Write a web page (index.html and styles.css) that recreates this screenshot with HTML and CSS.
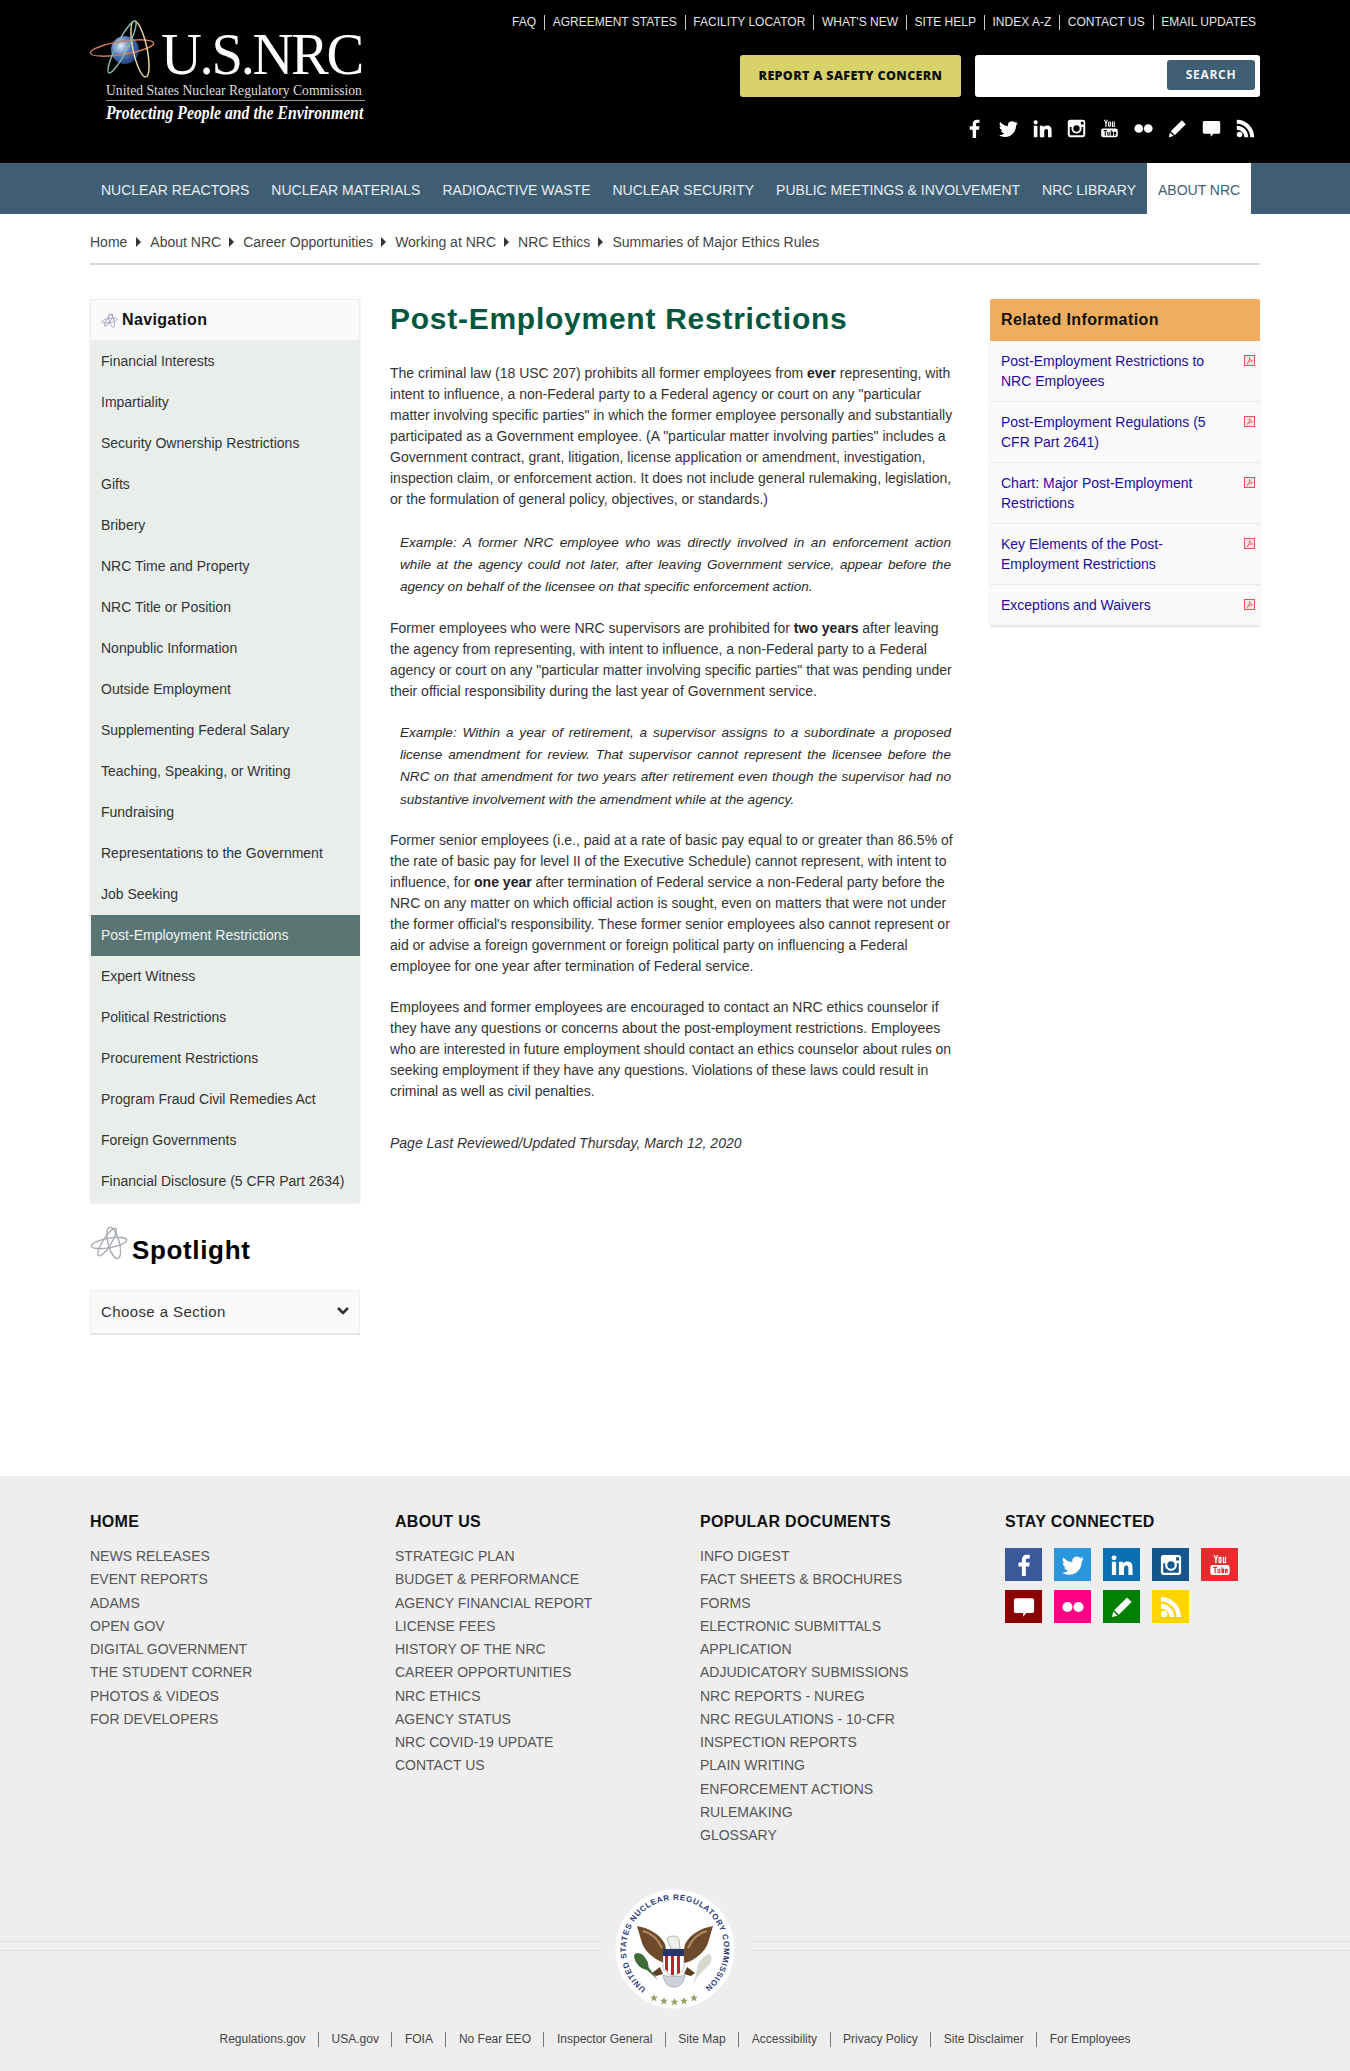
FILE: index.html
```html
<!DOCTYPE html>
<html lang="en">
<head>
<meta charset="utf-8">
<title>Post-Employment Restrictions</title>
<link rel="stylesheet" href="styles.css">
</head>
<body>
<svg class="defs" width="0" height="0" aria-hidden="true">
  <defs>
    <symbol id="i-f" viewBox="0 0 24 24"><path d="M14 24V13.5h3.6l.6-4.2H14V6.8c0-1.2.4-2 2.1-2h2.2V1c-.4 0-1.700-.2-3.200-.2-3.200 0-5.400 2-5.400 5.500v3H6v4.200h3.700V24z"/></symbol>
    <symbol id="i-t" viewBox="0 0 24 24"><path d="M23.500 5c-.9.400-1.800.7-2.800.8 1-.6 1.800-1.500 2.100-2.700-.9.600-2 1-3.100 1.200A4.900 4.900 0 0 0 11.400 8.800C7.400 8.600 3.800 6.700 1.400 3.700c-1.300 2.200-.6 5.100 1.500 6.500-.8 0-1.500-.2-2.200-.6 0 2.300 1.600 4.400 3.900 4.900-.7.200-1.500.2-2.200.1.600 2 2.400 3.400 4.600 3.400A9.900 9.900 0 0 1 0 20.500 14 14 0 0 0 7.500 22.700c9.100 0 14.300-7.700 14-14.600 1-.7 1.800-1.600 2-3.100z"/></symbol>
    <symbol id="i-in" viewBox="0 0 24 24"><path d="M1 8.500h4.600V23H1zM3.300 1.500a2.700 2.700 0 1 1 0 5.400 2.700 2.700 0 0 1 0-5.400zM8.600 8.500H13v2c.7-1.200 2.300-2.400 4.700-2.400 4.900 0 5.800 3.100 5.800 7.300V23H19v-6.700c0-1.600 0-3.700-2.200-3.700s-2.600 1.800-2.600 3.600V23H8.600z"/></symbol>
    <symbol id="i-ig" viewBox="0 0 24 24"><path fill-rule="evenodd" d="M4 1h16a3 3 0 0 1 3 3v16a3 3 0 0 1-3 3H4a3 3 0 0 1-3-3V4a3 3 0 0 1 3-3zm13.500 2.500v3.500h3.500V3.500zM3.500 10v9.500c0 .6.400 1 1 1h15c.6 0 1-.4 1-1V10h-2.300a6.500 6.500 0 1 1-12.400 0zM12 8a4 4 0 1 0 0 8 4 4 0 0 0 0-8z"/></symbol>
    <symbol id="i-yt" viewBox="0 0 24 24"><path fill-rule="evenodd" d="M5 1h1.500l1 3.500L8.500 1H10L8.300 6v4H6.800V6zM12 3c1.200 0 1.800.7 1.800 1.800v3.400c0 1.100-.6 1.800-1.800 1.800s-1.800-.7-1.800-1.800V4.800C10.200 3.700 10.800 3 12 3zm0 1.200c-.3 0-.4.200-.4.500v3.600c0 .3.100.5.400.5s.4-.2.400-.5V4.700c0-.3-.1-.5-.4-.5zM15 3h1.400v5.400c0 .3.100.4.300.4s.4-.2.600-.4V3h1.400v7h-1.400v-.8c-.4.500-.9.800-1.400.800-.7 0-.9-.5-.9-1.200zM4 12h16a2.500 2.500 0 0 1 2.500 2.500v6A2.500 2.500 0 0 1 20 23H4a2.500 2.500 0 0 1-2.500-2.500v-6A2.500 2.500 0 0 1 4 12zm.5 2v1.300H6V21h1.300v-5.700h1.500V14zm4.700 2v4c0 .7.300 1 .8 1 .4 0 .8-.2 1.100-.6v.6h1.100v-5h-1.100v3.700c-.2.200-.4.300-.5.300-.2 0-.3-.1-.3-.3V16zm4.300-2v7h1.100v-.4c.3.300.6.500 1 .500.700 0 1-.5 1-1.300v-2.700c0-.9-.3-1.400-1-1.400-.4 0-.7.200-1 .5V14zm5.500 2c-1 0-1.500.6-1.500 1.500v2c0 1 .5 1.600 1.500 1.600s1.500-.6 1.500-1.500v-.3h-1.100v.3c0 .4-.1.600-.4.600s-.4-.2-.4-.6V19h1.900v-1.500c0-.9-.5-1.500-1.500-1.500z"/></symbol>
    <symbol id="i-fl" viewBox="0 0 24 24"><circle cx="6" cy="12" r="5.500"/><circle cx="18" cy="12" r="5.500"/></symbol>
    <symbol id="i-pen" viewBox="0 0 24 24"><path d="M17.500 1.500l5 5L8.500 20.500l-5-5zM2.500 17l4.500 4.500-6 1.500z"/></symbol>
    <symbol id="i-ch" viewBox="0 0 24 24"><path d="M3 2.500h18a2 2 0 0 1 2 2v12a2 2 0 0 1-2 2h-6.500L11 22.500v-4H3a2 2 0 0 1-2-2v-12a2 2 0 0 1 2-2z"/></symbol>
    <symbol id="i-rss" viewBox="0 0 24 24"><circle cx="4.500" cy="19.500" r="3.500"/><path d="M1 8.500v5c5.300 0 9.500 4.200 9.500 9.500h5C15.500 15 9 8.500 1 8.500zM1 1v5c9.400 0 17 7.600 17 17h5C23 10.800 13.200 1 1 1z"/></symbol>
    <symbol id="i-atom" viewBox="0 0 40 36"><g fill="none" stroke-width="1.500"><ellipse cx="20" cy="18" rx="19" ry="5" transform="rotate(-10 20 18)"/><ellipse cx="25" cy="18" rx="17" ry="6" transform="rotate(75 25 18)"/><ellipse cx="18" cy="17" rx="17" ry="4.500" transform="rotate(122 18 17)"/></g></symbol>
    <symbol id="i-pdf" viewBox="0 0 11 11"><rect x=".5" y=".5" width="10" height="10" fill="#fbe3e3" stroke="#e8505b"/><path d="M3 8.500c1.500-1 3-4 2.500-6 .5 2 1.500 3 3 3.500-2-.3-4 .8-5.500 2.500z" fill="none" stroke="#e8505b" stroke-width=".8"/></symbol>
    <polygon id="star" points="0,-4 1.100,-1.200 4,-1.200 1.700,.6 2.500,3.400 0,1.700 -2.500,3.400 -1.700,.6 -4,-1.200 -1.100,-1.200"/>
  </defs>
</svg>

<header class="masthead">
  <div class="wrap masthead-in">
    <a class="logo" href="#">
      <svg class="logo-atom" viewBox="0 0 66 58" aria-hidden="true">
        <defs><radialGradient id="globe" cx=".35" cy=".35" r=".75"><stop offset="0" stop-color="#e3ebf8"/><stop offset=".5" stop-color="#4a75bb"/><stop offset="1" stop-color="#1b3467"/></radialGradient></defs>
        <circle cx="35" cy="30" r="14" fill="url(#globe)"/>
        <g fill="none" stroke-width="1.500">
          <ellipse cx="32" cy="28" rx="32" ry="6.500" transform="rotate(-9 32 28)" stroke="#c87a5a"/>
          <ellipse cx="50" cy="29" rx="28.500" ry="7" transform="rotate(78 50 29)" stroke="#e8d7a0"/>
          <ellipse cx="32" cy="27" rx="29" ry="5.500" transform="rotate(117 32 27)" stroke="#7fb6a8"/>
        </g>
      </svg>
      <div class="logo-main"><span>U.S.NRC</span></div>
      <div class="logo-sub"><span>United States Nuclear Regulatory Commission</span></div>
      <div class="logo-tag"><span>Protecting People and the Environment</span></div>
    </a>
    <div class="mast-right">
      <ul class="toplinks">
        <li>FAQ</li><li>AGREEMENT STATES</li><li>FACILITY LOCATOR</li><li>WHAT'S NEW</li><li>SITE HELP</li><li>INDEX A-Z</li><li>CONTACT US</li><li>EMAIL UPDATES</li>
      </ul>
      <div class="actions">
        <a class="report" href="#">REPORT A SAFETY CONCERN</a>
        <div class="searchbox"><span class="searchbtn">SEARCH</span></div>
      </div>
      <div class="socials">
        <svg class="si"><use href="#i-f"/></svg>
        <svg class="si"><use href="#i-t"/></svg>
        <svg class="si"><use href="#i-in"/></svg>
        <svg class="si"><use href="#i-ig"/></svg>
        <svg class="si"><use href="#i-yt"/></svg>
        <svg class="si"><use href="#i-fl"/></svg>
        <svg class="si"><use href="#i-pen"/></svg>
        <svg class="si"><use href="#i-ch"/></svg>
        <svg class="si"><use href="#i-rss"/></svg>
      </div>
    </div>
  </div>
</header>

<nav class="mainnav">
  <ul class="wrap mainnav-in">
    <li>NUCLEAR REACTORS</li><li>NUCLEAR MATERIALS</li><li>RADIOACTIVE WASTE</li><li>NUCLEAR SECURITY</li><li>PUBLIC MEETINGS &amp; INVOLVEMENT</li><li>NRC LIBRARY</li><li class="on">ABOUT NRC</li>
  </ul>
</nav>

<div class="wrap">
  <ul class="crumbs">
    <li>Home</li><li>About NRC</li><li>Career Opportunities</li><li>Working at NRC</li><li>NRC Ethics</li><li>Summaries of Major Ethics Rules</li>
  </ul>
</div>

<div class="wrap page">
  <aside class="left">
    <div class="sidenav">
      <div class="sidenav-h"><svg class="nav-atom"><use href="#i-atom"/></svg>Navigation</div>
      <ul class="sidenav-list">
        <li>Financial Interests</li>
        <li>Impartiality</li>
        <li>Security Ownership Restrictions</li>
        <li>Gifts</li>
        <li>Bribery</li>
        <li>NRC Time and Property</li>
        <li>NRC Title or Position</li>
        <li>Nonpublic Information</li>
        <li>Outside Employment</li>
        <li>Supplementing Federal Salary</li>
        <li>Teaching, Speaking, or Writing</li>
        <li>Fundraising</li>
        <li>Representations to the Government</li>
        <li>Job Seeking</li>
        <li class="on">Post-Employment Restrictions</li>
        <li>Expert Witness</li>
        <li>Political Restrictions</li>
        <li>Procurement Restrictions</li>
        <li>Program Fraud Civil Remedies Act</li>
        <li>Foreign Governments</li>
        <li>Financial Disclosure (5 CFR Part 2634)</li>
      </ul>
    </div>
    <h2 class="spot"><svg class="spot-atom"><use href="#i-atom"/></svg>Spotlight</h2>
    <div class="choose"><span>Choose a Section</span><svg class="chev" viewBox="0 0 14 10"><path d="M2 2l5 5 5-5" fill="none" stroke="#333" stroke-width="2.600"/></svg></div>
  </aside>

  <main class="content">
    <h1>Post-Employment Restrictions</h1>
    <p class="lead">The criminal law (18 USC 207) prohibits all former employees from <b>ever</b> representing, with intent to influence, a non-Federal party to a Federal agency or court on any "particular matter involving specific parties" in which the former employee personally and substantially participated as a Government employee. (A "particular matter involving parties" includes a Government contract, grant, litigation, license application or amendment, investigation, inspection claim, or enforcement action. It does not include general rulemaking, legislation, or the formulation of general policy, objectives, or standards.)</p>
    <p class="ex">Example: A former NRC employee who was directly involved in an enforcement action while at the agency could not later, after leaving Government service, appear before the agency on behalf of the licensee on that specific enforcement action.</p>
    <p>Former employees who were NRC supervisors are prohibited for <b>two years</b> after leaving the agency from representing, with intent to influence, a non-Federal party to a Federal agency or court on any "particular matter involving specific parties" that was pending under their official responsibility during the last year of Government service.</p>
    <p class="ex">Example: Within a year of retirement, a supervisor assigns to a subordinate a proposed license amendment for review. That supervisor cannot represent the licensee before the NRC on that amendment for two years after retirement even though the supervisor had no substantive involvement with the amendment while at the agency.</p>
    <p>Former senior employees (i.e., paid at a rate of basic pay equal to or greater than 86.5% of the rate of basic pay for level II of the Executive Schedule) cannot represent, with intent to influence, for <b>one year</b> after termination of Federal service a non-Federal party before the NRC on any matter on which official action is sought, even on matters that were not under the former official's responsibility. These former senior employees also cannot represent or aid or advise a foreign government or foreign political party on influencing a Federal employee for one year after termination of Federal service.</p>
    <p>Employees and former employees are encouraged to contact an NRC ethics counselor if they have any questions or concerns about the post-employment restrictions. Employees who are interested in future employment should contact an ethics counselor about rules on seeking employment if they have any questions. Violations of these laws could result in criminal as well as civil penalties.</p>
    <p class="updated">Page Last Reviewed/Updated Thursday, March 12, 2020</p>
  </main>

  <aside class="right">
    <div class="related-h">Related Information</div>
    <ul class="related">
      <li><span>Post-Employment Restrictions to NRC Employees</span><svg class="pdf"><use href="#i-pdf"/></svg></li>
      <li><span>Post-Employment Regulations (5 CFR Part 2641)</span><svg class="pdf"><use href="#i-pdf"/></svg></li>
      <li><span>Chart: Major Post-Employment Restrictions</span><svg class="pdf"><use href="#i-pdf"/></svg></li>
      <li><span>Key Elements of the Post-Employment Restrictions</span><svg class="pdf"><use href="#i-pdf"/></svg></li>
      <li><span>Exceptions and Waivers</span><svg class="pdf"><use href="#i-pdf"/></svg></li>
    </ul>
  </aside>
</div>

<footer class="footer">
  <div class="wrap fcols">
    <div class="fcol">
      <h3>HOME</h3>
      <ul><li>NEWS RELEASES</li><li>EVENT REPORTS</li><li>ADAMS</li><li>OPEN GOV</li><li>DIGITAL GOVERNMENT</li><li>THE STUDENT CORNER</li><li>PHOTOS &amp; VIDEOS</li><li>FOR DEVELOPERS</li></ul>
    </div>
    <div class="fcol">
      <h3>ABOUT US</h3>
      <ul><li>STRATEGIC PLAN</li><li>BUDGET &amp; PERFORMANCE</li><li>AGENCY FINANCIAL REPORT</li><li>LICENSE FEES</li><li>HISTORY OF THE NRC</li><li>CAREER OPPORTUNITIES</li><li>NRC ETHICS</li><li>AGENCY STATUS</li><li>NRC COVID-19 UPDATE</li><li>CONTACT US</li></ul>
    </div>
    <div class="fcol">
      <h3>POPULAR DOCUMENTS</h3>
      <ul><li>INFO DIGEST</li><li>FACT SHEETS &amp; BROCHURES</li><li>FORMS</li><li>ELECTRONIC SUBMITTALS</li><li>APPLICATION</li><li>ADJUDICATORY SUBMISSIONS</li><li>NRC REPORTS - NUREG</li><li>NRC REGULATIONS - 10-CFR</li><li>INSPECTION REPORTS</li><li>PLAIN WRITING</li><li>ENFORCEMENT ACTIONS</li><li>RULEMAKING</li><li>GLOSSARY</li></ul>
    </div>
    <div class="fcol">
      <h3>STAY CONNECTED</h3>
      <div class="tiles">
        <span class="tile c-fb"><svg><use href="#i-f"/></svg></span>
        <span class="tile c-tw"><svg><use href="#i-t"/></svg></span>
        <span class="tile c-li"><svg><use href="#i-in"/></svg></span>
        <span class="tile c-ig"><svg><use href="#i-ig"/></svg></span>
        <span class="tile c-yt"><svg><use href="#i-yt"/></svg></span>
        <span class="tile c-ch"><svg><use href="#i-ch"/></svg></span>
        <span class="tile c-fl"><svg><use href="#i-fl"/></svg></span>
        <span class="tile c-pn"><svg><use href="#i-pen"/></svg></span>
        <span class="tile c-rs"><svg><use href="#i-rss"/></svg></span>
      </div>
    </div>
  </div>

  <div class="sealrow">
    <span class="sealrule"></span>
    <svg class="seal" viewBox="0 0 120 120" role="img" aria-label="Seal">
      <defs><path id="ring" d="M31.900 100.100A49 49 0 1 1 88.100 100.100"/></defs>
      <circle cx="60" cy="60" r="59.500" fill="#fff"/>
      <text class="sealtxt"><textPath href="#ring" textLength="244" startOffset="1">UNITED STATES NUCLEAR REGULATORY COMMISSION</textPath></text>
      <path d="M22 37c11 2 22 7 28 18l3 16-3 3c-10-3-20-11-23-20z" fill="#6e4a2c"/>
      <path d="M98 37c-11 2-22 7-28 18l-3 16 3 3c10-3 20-11 23-20z" fill="#6e4a2c"/>
      <path d="M28 42c8 2 15 8 19 17M92 42c-8 2-15 8-19 17" fill="none" stroke="#b08a5c" stroke-width="2"/>
      <path d="M52 50c2-4 10-4 12 0l1 10h-9z" fill="#eee" stroke="#8a8a60" stroke-width=".6"/>
      <path d="M48 66h21v12c0 4-5 7-10.500 9C53 85 48 82 48 78z" fill="#fff" stroke="#666" stroke-width=".4"/>
      <path d="M48 60h21v7H48z" fill="#27366f"/>
      <path d="M50 67h3v16l-3-3zM56 67h3v19h-3zM62 67h3v17l-3 1z" fill="#b3272d"/>
      <path d="M45 78l-4 3-4 3 4 3 7-2zM72 78l4 3 4 3-4 3-7-2z" fill="#5c4023"/>
      <path d="M19 66c3-4 9-2 12 4 3 4 2 7 3 9l9 12-11-10c-7-1-13-8-13-15z" fill="#3f6b34"/>
      <path d="M94 65c4 2 3 8-1 12l-10 10-5 8 3-9 1-7c1-7 7-12 12-14z" fill="#d8d8cf"/>
      <path d="M48 86c4 2 18 2 22 0-1 9-6 12-11 12s-10-3-11-12z" fill="#cdd2dc" stroke="#7f8796" stroke-width=".5"/>
      <g fill="#9a9d64"><use href="#star" x="39" y="109"/><use href="#star" x="49" y="112"/><use href="#star" x="59.500" y="113"/><use href="#star" x="69" y="112"/><use href="#star" x="79" y="109"/></g>
    </svg>
    <span class="sealrule"></span>
  </div>

  <ul class="legal">
    <li>Regulations.gov</li><li>USA.gov</li><li>FOIA</li><li>No Fear EEO</li><li>Inspector General</li><li>Site Map</li><li>Accessibility</li><li>Privacy Policy</li><li>Site Disclaimer</li><li>For Employees</li>
  </ul>
</footer>
</body>
</html>
```

FILE: styles.css
```css
* { box-sizing: border-box; }
html, body { margin: 0; padding: 0; }
body { font-family: "Liberation Sans", Arial, sans-serif; font-size: 14px; color: #333; background: #fff; }
ul { list-style: none; margin: 0; padding: 0; }
a { text-decoration: none; color: inherit; }
.defs { position: absolute; }
.wrap { width: 1170px; margin: 0 auto; }

.masthead { background: #000; height: 163px; }
.masthead-in { display: flex; justify-content: space-between; height: 163px; }
.logo { display: block; width: 275px; padding-top: 24px; color: #fff; position: relative; }
.logo-atom { position: absolute; left: 0; top: 20px; width: 66px; height: 58px; overflow: visible; }
.logo-main { font-family: "Liberation Serif", serif; font-size: 59px; line-height: 60px; height: 58px; margin-left: 71px; white-space: nowrap; letter-spacing: -2.400px; }
.logo-main span { display: inline-block; transform: scaleX(.96); transform-origin: left top; }
.logo-sub { font-family: "Liberation Serif", serif; font-size: 14.500px; line-height: 16px; margin-left: 16px; white-space: nowrap; height: 19px; border-bottom: 1px solid #999; color: #ddd; }
.logo-sub span { display: inline-block; transform: scaleX(.94); transform-origin: left top; }
.logo-tag { font-family: "Liberation Serif", serif; font-style: italic; font-weight: bold; font-size: 18px; line-height: 22px; margin-left: 16px; padding-top: 1px; white-space: nowrap; }
.logo-tag span { display: inline-block; transform: scaleX(.875); transform-origin: left top; }

.mast-right { display: flex; flex-direction: column; align-items: flex-end; }
.toplinks { display: flex; padding-top: 15px; height: 55px; margin-right: 4px; }
.toplinks li { color: #e4e4e4; font-size: 12px; line-height: 15px; height: 15px; padding: 0 0 0 7.500px; margin-left: 8.100px; border-left: 1px solid #ccc; white-space: nowrap; }
.toplinks li:first-child { border-left: 0; }
.actions { display: flex; gap: 14px; }
.report { width: 221px; height: 42px; background: #d9d26a; border-radius: 3px; color: #111; font-family: "Open Sans", sans-serif; font-weight: 800; font-size: 12.500px; line-height: 42px; text-align: center; letter-spacing: .35px; }
.searchbox { width: 285px; height: 42px; background: #fff; border-radius: 3px; padding: 5px 5px 0 0; display: flex; justify-content: flex-end; align-items: flex-start; }
.searchbtn { width: 88px; height: 30px; background: #3f5e73; border-radius: 3px; color: #f2f2f2; font-family: "Open Sans", sans-serif; font-weight: 700; font-size: 12px; line-height: 29px; text-align: center; letter-spacing: .7px; }
.socials { display: flex; gap: 14.900px; margin-top: 22px; margin-right: 5px; }
.si { width: 19px; height: 19px; fill: #fff; }

.mainnav { background: #3f5e73; height: 51px; }
.mainnav-in { display: flex; height: 51px; }
.mainnav li { color: #e7edf1; font-size: 14px; line-height: 54px; padding: 0 11px; white-space: nowrap; }
.mainnav li.on { background: #fff; color: #3f5e73; }

.crumbs { display: flex; height: 51px; border-bottom: 2px solid #d9d9d9; padding-top: 19px; }
.crumbs li { line-height: 18px; color: #444; font-size: 14px; }
.crumbs li:first-child { padding-right: 1px; }
.crumbs li + li { padding-left: 8px; }
.crumbs li + li::before { content: ""; display: inline-block; width: 0; height: 0; border-left: 5.500px solid #333; border-top: 5px solid transparent; border-bottom: 5px solid transparent; margin: 0 9px 0 0; }

.page { display: flex; padding-top: 34px; height: 1211px; }
.left { width: 270px; flex: none; }
.content { width: 566px; flex: none; margin-left: 30px; }
.right { width: 270px; flex: none; margin-left: 34px; }

.sidenav { box-shadow: 0 1px 2px rgba(0,0,0,.12); }
.sidenav-h { height: 42px; background: #fafafa; border: 1px solid #eee; font-weight: bold; font-size: 16px; color: #111; line-height: 40px; padding-left: 10px; display: flex; align-items: center; letter-spacing: .35px; }
.nav-atom { width: 17px; height: 15px; margin-right: 4px; stroke: #8b88b8; fill: none; }
.sidenav-list li { height: 41px; background: #e9eeeb; border-left: 1px solid #f1f1f1; padding-left: 10px; line-height: 41px; font-size: 14px; color: #333; }
.sidenav-list li.on { background: #5a7672; color: #eef3f1; }
.spot { margin: 30px 0 0; font-size: 26px; line-height: 36px; height: 36px; color: #000; display: flex; align-items: flex-end; letter-spacing: .65px; font-weight: bold; }
.spot-atom { width: 38px; height: 34px; stroke: #a8acb4; fill: none; margin-right: 4px; margin-top: -6px; align-self: flex-start; }
.choose { margin-top: 22px; height: 45px; background: #fafafa; border: 1px solid #f0f0f0; border-bottom: 2px solid #e5e5e5; display: flex; align-items: center; justify-content: space-between; padding: 0 9px 2px 10px; font-size: 15px; letter-spacing: .4px; color: #333; }
.chev { width: 14px; height: 10px; }

.content h1 { margin: 0 0 24px; font-size: 30px; line-height: 40px; color: #00573f; letter-spacing: .74px; font-weight: bold; }
.content p { margin: 0 0 20px; line-height: 21px; font-size: 14px; color: #333; }
.content p b { color: #222; }
.content p.lead { margin-bottom: 21.500px; }
.content p.ex { font-size: 13.600px; font-style: italic; line-height: 22.400px; padding: 0 5px 0 10px; text-align: justify; margin-bottom: 18.800px; color: #2a2a2a; }
.content p.updated { font-style: italic; margin-top: 31px; }

.related-h { height: 42px; background: #f0ad5e; border-radius: 2px 2px 0 0; font-weight: bold; font-size: 16px; color: #111; line-height: 41px; padding-left: 11px; letter-spacing: .4px; }
.related { box-shadow: 0 1px 2px rgba(0,0,0,.12); }
.related li { background: #fafafa; padding: 10px 5px 9.200px 11px; display: flex; justify-content: space-between; align-items: flex-start; line-height: 20.400px; border-bottom: 1px solid #e8e8e8; font-size: 14px; }
.related li span { width: 215px; color: #1c0d9c; }
.pdf { width: 11px; height: 11px; margin-top: 4px; flex: none; }

.footer { background: #eee; height: 595px; padding-top: 36px; }
.fcols { display: flex; height: 377px; }
.fcol { width: 305px; flex: none; }
.fcol h3 { margin: 0 0 13px; font-size: 16px; line-height: 20px; color: #111; letter-spacing: .3px; }
.fcol li { font-size: 14px; line-height: 23.250px; color: #555; white-space: nowrap; }
.tiles { display: grid; grid-template-columns: repeat(5, 37px); column-gap: 12px; row-gap: 9px; margin-top: 16px; }
.tile { width: 37px; height: 33px; display: flex; align-items: center; justify-content: center; }
.tile svg { width: 22px; height: 22px; fill: #fff; }
.c-fb { background: #3b5998; }
.c-tw { background: #2a96dc; }
.c-li { background: #0a6fb0; }
.c-ig { background: #15558c; }
.c-yt { background: #e52d2f; }
.c-ch { background: #8b0000; }
.c-fl { background: #ff0084; }
.c-pn { background: #008000; }
.c-rs { background: #ffd400; }

.sealrow { display: flex; align-items: center; height: 120px; }
.sealrule { flex: 1; height: 10px; margin-bottom: 6px; border-top: 1px solid #ddd; border-bottom: 1px solid #ddd; }
.seal { width: 120px; height: 120px; margin: 0 15px; flex: none; }
.sealtxt { font-family: "Liberation Sans", sans-serif; font-size: 8px; font-weight: bold; fill: #2d3a78; }
.legal { display: flex; justify-content: center; margin-top: 23px; }
.legal li { font-size: 12px; line-height: 15px; color: #444; padding: 0 12.500px; border-left: 1px solid #777; white-space: nowrap; }
.legal li:first-child { border-left: 0; }
```
